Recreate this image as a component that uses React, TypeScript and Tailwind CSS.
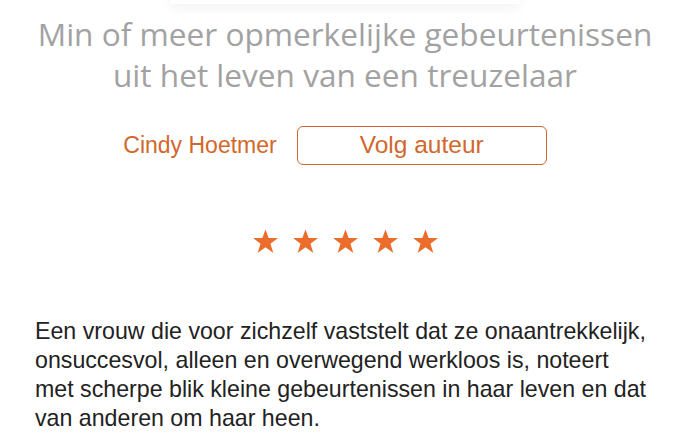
const orange = 'text-[#d2672c]';

function Stars({ count }: { count: number }) {
  return (
    <div className="flex items-center justify-center gap-[13px]">
      {Array.from({ length: count }).map((_, i) => (
        <svg key={i} width="27" height="26" viewBox="0 0 24 23" className="fill-[#ec6c2b]">
          <path d="M12 0.3l2.8 7.7h8.3l-6.7 5 2.6 8.2L12 16.2l-7 5 2.6-8.2L0.9 8h8.3z" />
        </svg>
      ))}
    </div>
  );
}

export default function App() {
  return (
    <div className="relative w-[690px] h-[446px] overflow-hidden bg-white">
      {/* shadow of the cover above */}
      <div className="absolute left-[170px] -top-[40px] w-[350px] h-[44px] bg-white shadow-[0_4px_10px_rgba(0,0,0,0.05)]" />

      <h1 className="pt-[13px] text-center font-['Open_Sans',sans-serif] text-[31.6px] leading-[41px] text-[#a2a2a2] font-normal">
        Min of meer opmerkelijke gebeurtenissen
        <br />
        uit het leven van een treuzelaar
      </h1>

      <div className="mt-[31px] pr-[20px] flex items-center justify-center gap-[20px] font-['Liberation_Sans',Arial,sans-serif]">
        <span className={`${orange} text-[23px]`}>Cindy Hoetmer</span>
        <button className={`${orange} w-[250px] h-[39px] rounded-[6px] border-[1.5px] border-[#d2672c] text-[24.5px] leading-none`}>
          Volg auteur
        </button>
      </div>

      <div className="mt-[64px]">
        <Stars count={5} />
      </div>

      <p className="mt-[62px] px-[35px] font-['Liberation_Sans',Arial,sans-serif] text-[23.2px] leading-[29px] text-[#222]">
        Een vrouw die voor zichzelf vaststelt dat ze onaantrekkelijk,
        <br />
        onsuccesvol, alleen en overwegend werkloos is, noteert
        <br />
        met scherpe blik kleine gebeurtenissen in haar leven en dat
        <br />
        van anderen om haar heen.
      </p>
    </div>
  );
}
